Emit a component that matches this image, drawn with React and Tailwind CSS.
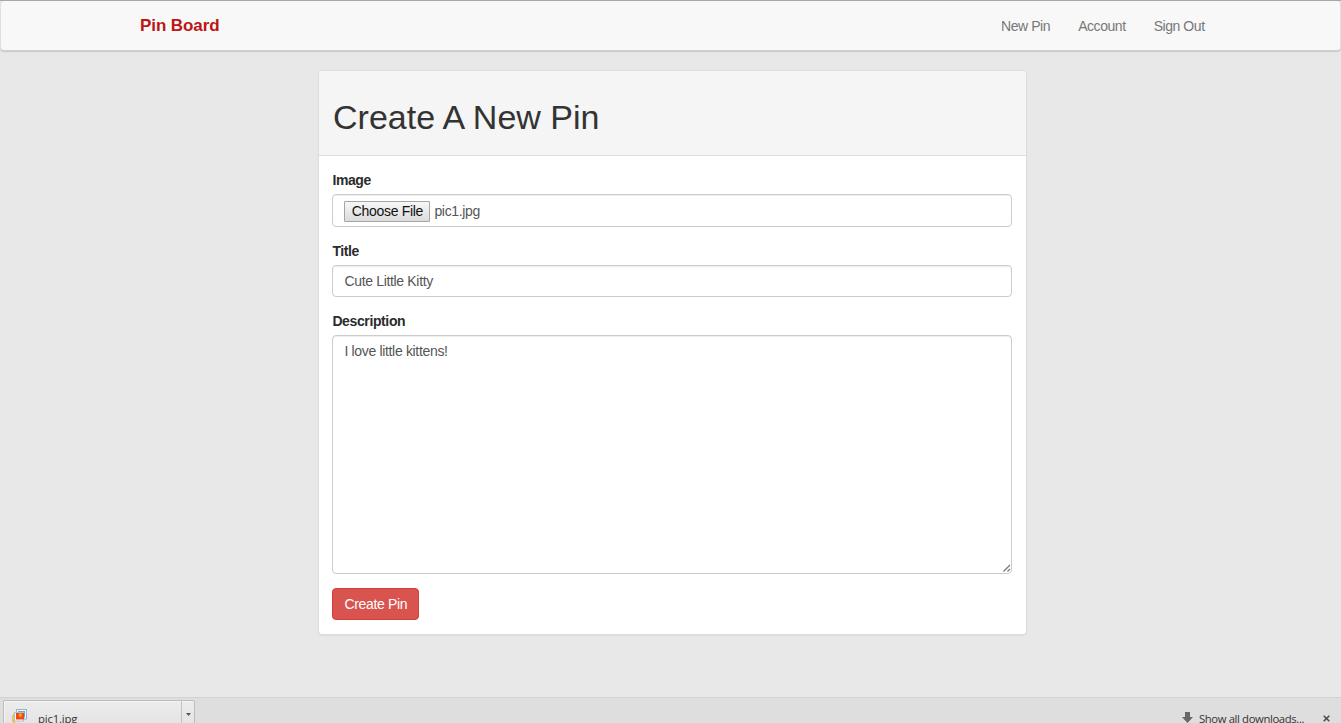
const fieldClass =
  "block w-full rounded-[4px] border border-[#ccc] bg-white px-[11px] text-[14px] tracking-[-0.33px] leading-[19px] text-[#555] shadow-[inset_0_1px_1px_rgba(0,0,0,0.075)] outline-none";

function Navbar() {
  return (
    <nav className="flex h-[50px] shrink-0 items-center justify-between rounded-[4px] border border-t-0 border-[#e0e0e0] border-b-[#d0d0d0] bg-[#f8f8f8] pl-[139px] pr-[135.4px] shadow-[0_1px_1px_rgba(0,0,0,0.14)]">
      <a className="text-[17px] font-bold leading-5 tracking-[-0.08px] text-[#bd1515]">Pin Board</a>
      <div className="flex gap-[28px] pt-px text-[14px] leading-5 tracking-[-0.44px] text-[#777]">
        <a>New Pin</a>
        <a>Account</a>
        <a>Sign Out</a>
      </div>
    </nav>
  );
}

function Label({ children }) {
  return <label className="mb-[4px] block text-[14px] font-bold leading-5 tracking-[-0.38px] text-[#2b2b2b]">{children}</label>;
}

function PinForm() {
  return (
    <section className="ml-[318px] mt-[19px] h-[565px] w-[709px] shrink-0 rounded-[4px] border border-[#dcdcdc] bg-white shadow-[0_1px_1px_rgba(0,0,0,0.05)]">
      <header className="h-[85px] rounded-t-[3px] border-b border-[#ddd] bg-[#f5f5f5] px-[14px] pt-[26px]">
        <h1 className="text-[34px] leading-10 text-[#333]">Create A New Pin</h1>
      </header>
      <form className="pl-[13.4px] pr-[14px] pt-[14px]">
        <Label>Image</Label>
        <div className={`${fieldClass} mb-[14px] flex h-[33px] items-center gap-1 pt-px`}>
          <button type="button" className="h-[21px] w-[86px] rounded-[1px] border border-[#a5a5a5] bg-linear-to-b from-[#f7f7f7] to-[#dcdcdc] text-[14px] leading-[19px] tracking-[-0.33px] text-[#111]">
            Choose File
          </button>
          <span>pic1.jpg</span>
        </div>
        <Label>Title</Label>
        <input className={`${fieldClass} mb-[14px] h-[32px]`} defaultValue="Cute Little Kitty" />
        <Label>Description</Label>
        <div className="relative">
          <textarea className={`${fieldClass} h-[239px] resize-none pt-[6px]`} defaultValue="I love little kittens!" />
          <svg className="absolute bottom-[2px] right-[1px] h-[8px] w-[8px]" viewBox="0 0 8 8" fill="none" stroke="#777" strokeWidth="1.2">
            <path d="M.5 7.5 7 1M4.5 7.5 7 5" />
          </svg>
        </div>
        <button type="button" className="mt-[14px] h-[32px] w-[87px] rounded-[4px] border border-[#d43f3a] bg-[#d9534f] text-[14px] leading-5 tracking-[-0.33px] text-white">
          Create Pin
        </button>
      </form>
    </section>
  );
}

function PictureIcon() {
  return (
    <svg className="h-[15px] w-[16px] shrink-0" viewBox="0 0 16 15">
      <path d="M2.5 5C0 8 0 12 3 14" fill="none" stroke="#f4bd55" strokeWidth="2" />
      <rect x="4.5" y=".5" width="10" height="9.5" fill="#eef6fc" stroke="#9eb2bf" />
      <rect x="6" y="2" width="7" height="6.5" fill="#5caee8" />
      <rect x="2.5" y="3.5" width="9" height="8.5" fill="#f8fbfd" stroke="#b4c0c8" />
      <rect x="4" y="4" width="8" height="6.5" fill="#e94a18" />
      <path d="M6.5 5.5 8.5 3.5 10 5.5 9 8.5 7 7.5Z" fill="#ff9b21" />
    </svg>
  );
}

function DownloadBar() {
  return (
    <footer className="mt-auto flex h-[26px] shrink-0 justify-between overflow-hidden border-t border-[#d2d2d2] bg-[#dedede] pl-[3px] font-['Open_Sans','Noto_Sans',sans-serif] text-[11.3px] text-[#333]">
      <div className="mt-[2px] flex h-[32px] w-[192px] rounded-[2px] border border-[#bcbcbc] bg-linear-to-b from-[#ececec] to-[#e2e2e2] shadow-[inset_1px_1px_0_#f5f5f5]">
        <div className="flex flex-1 items-start pl-[8px] pt-[8px]">
          <PictureIcon />
          <span className="ml-[10px] mt-[2px] leading-4 tracking-[-0.15px]">pic1.jpg</span>
        </div>
        <div className="flex w-[13px] justify-center border-l border-[#c2c2c2] pt-[12px]">
          <svg className="h-[3px] w-[5px]" viewBox="0 0 5 3"><path d="M0 0h5L2.5 3Z" fill="#555" /></svg>
        </div>
      </div>
      <div className="flex items-start pr-[11px] pt-[13px]">
        <svg className="mt-[1px] h-[11px] w-[11px]" viewBox="0 0 11 11"><path d="M3 0h5v5h3L5.5 11 0 5h3Z" fill="#686868" /></svg>
        <span className="ml-[6px] w-[106px] whitespace-nowrap leading-4 tracking-[-0.38px]">Show all downloads...</span>
        <svg className="ml-[18px] mt-[4px] h-[7px] w-[7px]" viewBox="0 0 7 7"><path d="m.7.7 5.6 5.6M6.3.7.7 6.3" stroke="#4d4d4d" strokeWidth="1.6" /></svg>
      </div>
    </footer>
  );
}

export default function App() {
  return (
    <div className="flex h-[723px] w-[1341px] flex-col overflow-hidden border-t border-[#a8a8a8] bg-[#e8e8e8] font-['Liberation_Sans',Arial,sans-serif]">
      <Navbar />
      <PinForm />
      <DownloadBar />
    </div>
  );
}
